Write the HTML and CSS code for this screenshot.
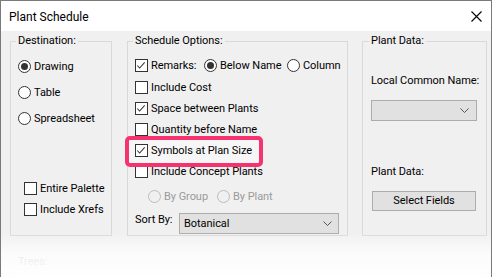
FILE: index.html
```html
<!DOCTYPE html>
<html>
<head>
<meta charset="utf-8">
<title>Plant Schedule</title>
<link rel="stylesheet" href="styles.css">
</head>
<body>
<div class="window">
  <div class="titlebar">
    <span class="title">Plant Schedule</span>
    <svg class="close" width="11" height="11" viewBox="0 0 11 11"><path d="M0.5 0.5 L10.5 10.5 M10.5 0.5 L0.5 10.5" stroke="#000" stroke-width="1.1" fill="none"/></svg>
  </div>
  <div class="body">
    <div class="groups">
      <section class="group dest">
        <div class="legend">Destination:</div>
        <div class="radio-list">
          <div class="opt"><span class="rb on"></span>Drawing</div>
          <div class="opt"><span class="rb"></span>Table</div>
          <div class="opt"><span class="rb"></span>Spreadsheet</div>
        </div>
        <div class="check-list">
          <div class="opt"><span class="cb"></span>Entire Palette</div>
          <div class="opt"><span class="cb"></span>Include Xrefs</div>
        </div>
      </section>

      <section class="group sched">
        <div class="legend">Schedule Options:</div>
        <div class="sched-list">
          <div class="opt remarks">
            <div class="opt w-remarks"><span class="cb"><svg viewBox="0 0 13 13"><path d="M2.5 6.5 L5 9.2 L10.5 3.2" stroke="#333" stroke-width="1.1" fill="none"/></svg></span>Remarks:</div>
            <div class="opt w-below"><span class="rb on"></span>Below Name</div>
            <div class="opt"><span class="rb"></span>Column</div>
          </div>
          <div class="opt"><span class="cb"></span>Include Cost</div>
          <div class="opt"><span class="cb"><svg viewBox="0 0 13 13"><path d="M2.5 6.5 L5 9.2 L10.5 3.2" stroke="#333" stroke-width="1.1" fill="none"/></svg></span>Space between Plants</div>
          <div class="opt"><span class="cb"></span>Quantity before Name</div>
          <div class="opt hl"><span class="marker"></span><span class="cb"><svg viewBox="0 0 13 13"><path d="M2.5 6.5 L5 9.2 L10.5 3.2" stroke="#333" stroke-width="1.1" fill="none"/></svg></span>Symbols at Plan Size</div>
          <div class="opt"><span class="cb"></span>Include Concept Plants</div>
          <div class="opt sub disabled">
            <div class="opt w-group"><span class="rb"></span>By Group</div>
            <div class="opt"><span class="rb"></span>By Plant</div>
          </div>
          <div class="sort">
            <span class="sort-label">Sort By:</span>
            <div class="combo sort-combo"><span>Botanical</span><svg width="9" height="5" viewBox="0 0 9 5"><path d="M0.5 0.5 L4.5 4.5 L8.5 0.5" stroke="#555" stroke-width="1" fill="none"/></svg></div>
          </div>
        </div>
      </section>

      <section class="group plant">
        <div class="legend">Plant Data:</div>
        <div class="pd">
          <div class="pd-label first">Local Common Name:</div>
          <div class="combo pd-combo"><span></span><svg width="9" height="5" viewBox="0 0 9 5"><path d="M0.5 0.5 L4.5 4.5 L8.5 0.5" stroke="#555" stroke-width="1" fill="none"/></svg></div>
          <div class="pd-label second">Plant Data:</div>
          <div class="button">Select Fields</div>
        </div>
      </section>
    </div>
    <section class="group trees">
      <div class="legend">Trees:</div>
    </section>
  </div>
  <div class="fade"></div>
</div>
</body>
</html>
```

FILE: styles.css
```css
html, body {
  margin: 0;
  padding: 0;
  background: #ffffff;
}

body {
  font-family: Roboto, "Liberation Sans", Arial, sans-serif;
  font-size: 11px;
  letter-spacing: -0.05px;
  color: #000;
}

.window {
  position: relative;
  width: 490px;
  height: 276px;
  border: 1px solid #7a7a7a;
  border-bottom: 0;
  overflow: hidden;
  background: #f0f0f0;
}

.titlebar {
  height: 30px;
  background: #ffffff;
  display: flex;
  align-items: center;
  justify-content: space-between;
  padding: 0 9px 0 8px;
}

.title {
  font-size: 12px;
  letter-spacing: 0;
  line-height: 14px;
  padding-top: 1px;
}

.close {
  display: block;
}

.body {
  padding: 10px 0 0 9px;
}

.groups {
  display: flex;
  height: 195px;
}

.group {
  box-sizing: border-box;
  border: 1px solid #d9d9d9;
  display: flex;
  flex-direction: column;
}

.legend {
  align-self: flex-start;
  margin: -8px 0 0 5px;
  padding: 0 2px;
  line-height: 14px;
  background: #f0f0f0;
  white-space: nowrap;
}

.dest { width: 102px; }
.sched { width: 221px; margin-left: 15px; }
.plant { width: 125px; margin-left: 14px; }
.plant .legend { margin-left: 6px; }

.opt {
  display: flex;
  align-items: center;
  white-space: nowrap;
}

.cb {
  box-sizing: border-box;
  width: 13px;
  height: 13px;
  border: 1px solid #333;
  background: #fff;
  margin-right: 3px;
  flex: none;
  display: flex;
}

.cb svg {
  margin: -1px 0 0 -1px;
  width: 13px;
  height: 13px;
}

.rb {
  box-sizing: border-box;
  width: 13px;
  height: 13px;
  border: 1px solid #333;
  border-radius: 50%;
  background: #fff;
  margin-right: 3px;
  flex: none;
  display: flex;
  align-items: center;
  justify-content: center;
}

.rb.on::after {
  content: "";
  width: 7px;
  height: 7px;
  border-radius: 50%;
  background: #333;
}

/* Destination */
.radio-list {
  margin-top: 5px;
  padding-left: 7px;
}
.radio-list .opt { height: 26px; }

.check-list {
  margin-top: 47px;
  padding-left: 13px;
}
.check-list .opt { height: 21px; }

/* Schedule options */
.sched-list {
  margin-top: 6px;
  padding-left: 7px;
  display: flex;
  flex-direction: column;
}
.sched-list > .opt { height: 21px; }
.sched-list > .opt.remarks { height: 23px; }

.w-remarks { width: 69px; }
.w-below { width: 83px; }

.hl {
  position: relative;
  z-index: 0;
}
.marker {
  position: absolute;
  z-index: -1;
  left: -10px;
  top: -4px;
  width: 138px;
  height: 31px;
  box-sizing: border-box;
  border: 4px solid #f5336f;
  border-radius: 5px;
  background: #f6f6f6;
}

.sched-list > .opt.sub {
  height: 28px;
  padding-left: 13px;
}
.w-group { width: 69px; }
.disabled { color: #9a9a9a; }
.disabled .rb {
  border-color: #bcbcbc;
  background: #f0f0f0;
}

.sort {
  display: flex;
  align-items: flex-start;
  margin-top: 3px;
}
.sort-label {
  width: 44px;
  line-height: 14px;
}

.combo {
  box-sizing: border-box;
  height: 21px;
  border: 1px solid #adadad;
  background: #e1e1e1;
  display: flex;
  align-items: center;
  justify-content: space-between;
  padding: 0 6px 0 4px;
  line-height: 19px;
}
.sort-combo { width: 160px; }

/* Plant data */
.pd {
  padding-left: 8px;
  display: flex;
  flex-direction: column;
  align-items: flex-start;
}
.pd-label { line-height: 14px; white-space: nowrap; }
.pd-label.first { margin-top: 26px; }
.pd-combo {
  width: 106px;
  margin-top: 12px;
  padding-right: 7px;
}
.pd-label.second { margin-top: 44px; }
.button {
  box-sizing: border-box;
  width: 104px;
  height: 20px;
  margin: 12px 0 0 1px;
  border: 1px solid #adadad;
  background: #e1e1e1;
  text-align: center;
  line-height: 18px;
}

/* Trees group (faded) */
.trees {
  width: 473px;
  height: 40px;
  margin-top: 26px;
  border-color: #ececec;
}
.trees .legend {
  color: #a8a8a8;
}

.fade {
  position: absolute;
  left: 0;
  right: 0;
  bottom: 0;
  height: 44px;
  background: linear-gradient(rgba(255,255,255,0), rgba(255,255,255,0.75) 45%, rgba(255,255,255,0.96));
}
```
